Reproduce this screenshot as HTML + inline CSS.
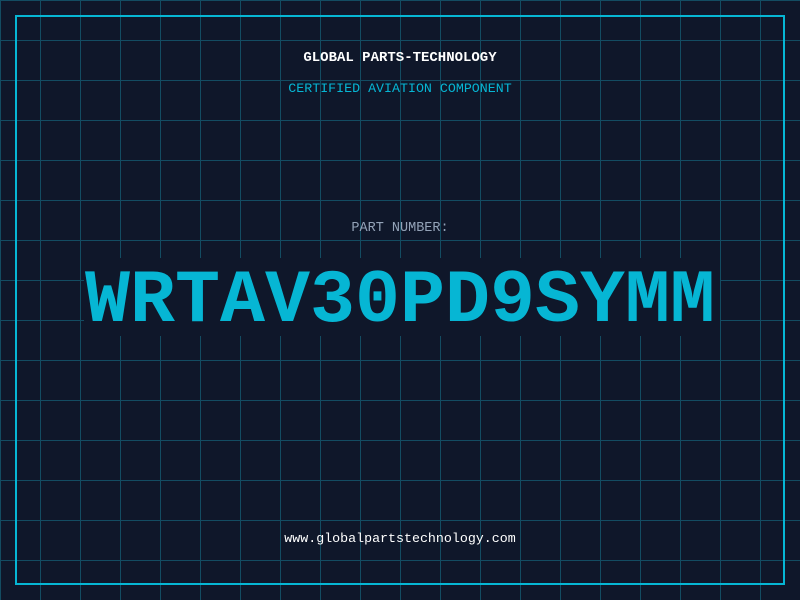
<!DOCTYPE html>
<html><head><style>
html,body{margin:0;padding:0;}
body{width:800px;height:600px;background:#0f172a;position:relative;overflow:hidden;font-family:"Liberation Mono",monospace;}
.grid{position:absolute;inset:0;background-image:linear-gradient(to right,#155e75 1px,transparent 1px),linear-gradient(to bottom,#155e75 1px,transparent 1px);background-size:40px 40px;opacity:.75;}
.border{position:absolute;left:15px;top:15px;width:766px;height:566px;border:2px solid #06b6d4;}
.t{position:absolute;left:0;width:800px;text-align:center;white-space:nowrap;}
.band{position:absolute;left:84px;top:258px;width:636px;height:78px;background:#0f172a;}
</style></head><body>
<div class="grid"></div>
<div class="border"></div>
<div class="t" style="top:50px;font-size:14px;font-weight:bold;color:#fff;">GLOBAL PARTS-TECHNOLOGY</div>
<div class="t" style="top:81px;font-size:13.3px;color:#06b6d4;">CERTIFIED AVIATION COMPONENT</div>
<div class="t" style="top:221px;font-size:13.5px;color:#94a3b8;">PART NUMBER:</div>
<div class="band"></div>
<div class="t" style="top:257px;font-size:75px;line-height:90px;font-weight:bold;color:#06b6d4;">WRTAV30PD9SYMM</div>
<div class="t" style="top:531px;font-size:13.3px;color:#fff;">www.globalpartstechnology.com</div>
</body></html>
